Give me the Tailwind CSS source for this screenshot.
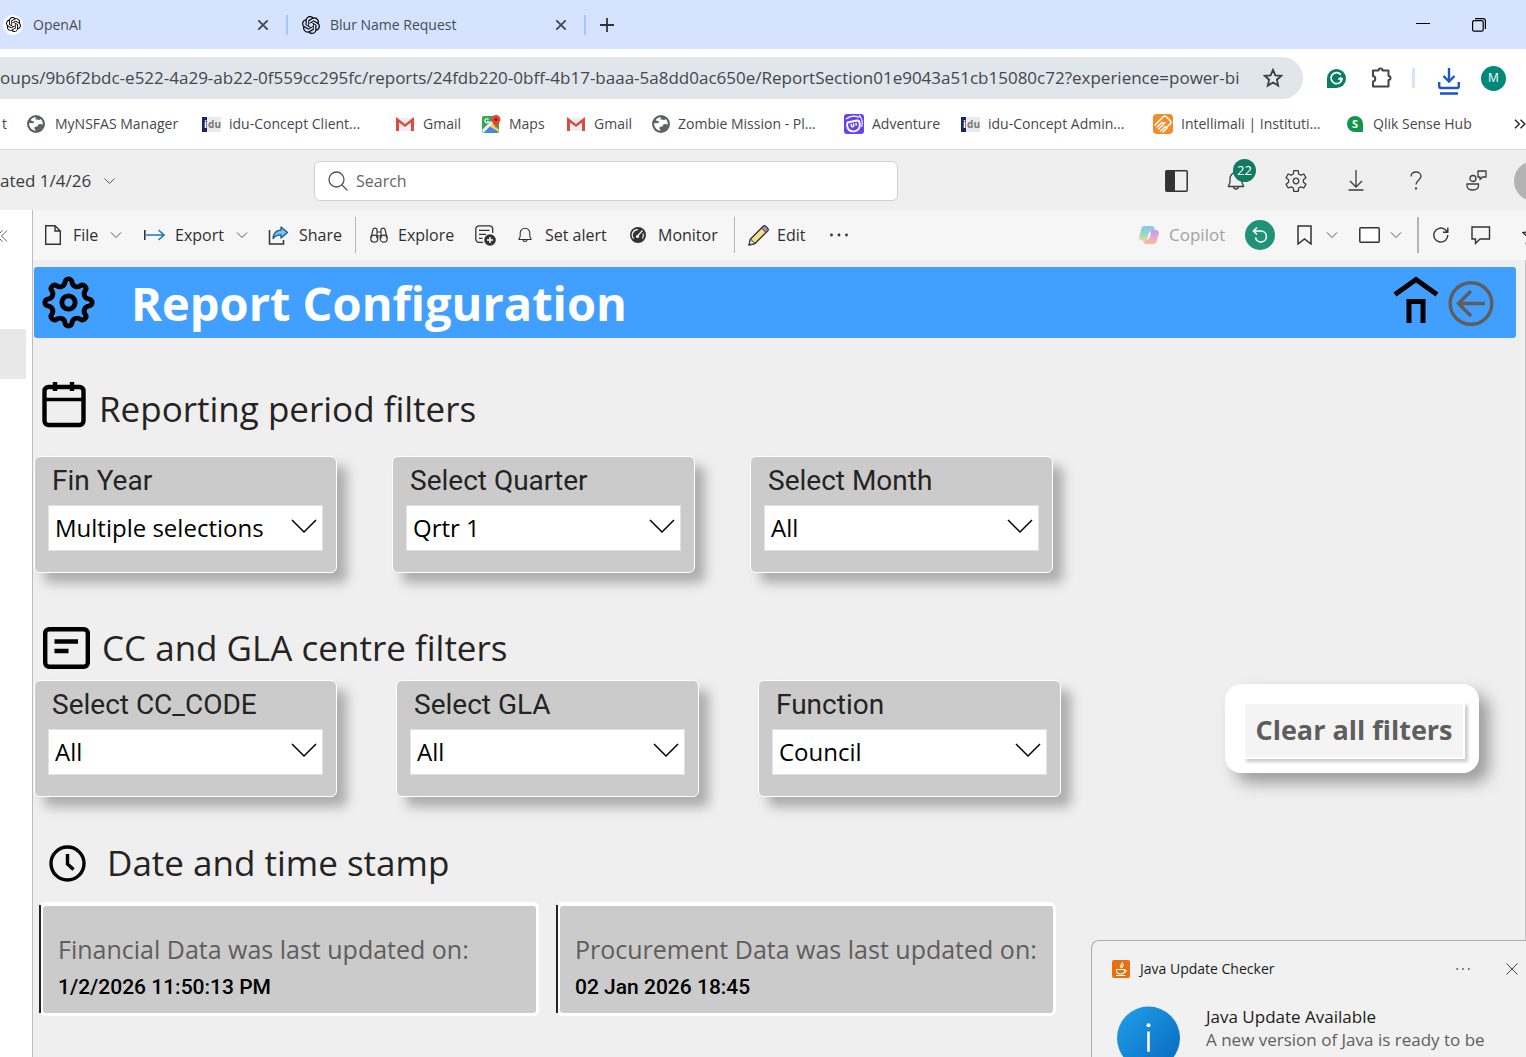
<!DOCTYPE html>
<html lang="en">
<head>
  <meta charset="UTF-8" />
  <meta name="viewport" content="width=device-width, initial-scale=1" />
  <title>Report Configuration</title>
  <script src="https://cdn.jsdelivr.net/npm/@tailwindcss/browser@4"></script>
</head>
<body class="h-screen overflow-hidden flex flex-col bg-white text-[#333] font-['Open_Sans',sans-serif]">

  <!-- shared icons -->
  <svg class="hidden">
    <symbol id="openai" viewBox="0 0 24 24"><path fill="currentColor" d="M22.2819 9.8211a5.9847 5.9847 0 0 0-.5157-4.9108 6.0462 6.0462 0 0 0-6.5098-2.9A6.0651 6.0651 0 0 0 4.9807 4.1818a5.9847 5.9847 0 0 0-3.9977 2.9 6.0462 6.0462 0 0 0 .7427 7.0966 5.98 5.98 0 0 0 .511 4.9107 6.051 6.051 0 0 0 6.5146 2.9001A5.9847 5.9847 0 0 0 13.2599 24a6.0557 6.0557 0 0 0 5.7718-4.2058 5.9894 5.9894 0 0 0 3.9977-2.9001 6.0557 6.0557 0 0 0-.7475-7.0729zm-9.022 12.6081a4.4755 4.4755 0 0 1-2.8764-1.0408l.1419-.0804 4.7783-2.7582a.7948.7948 0 0 0 .3927-.6813v-6.7369l2.02 1.1686a.071.071 0 0 1 .038.052v5.5826a4.504 4.504 0 0 1-4.4945 4.4944zm-9.6607-4.1254a4.4708 4.4708 0 0 1-.5346-3.0137l.142.0852 4.783 2.7582a.7712.7712 0 0 0 .7806 0l5.8428-3.3685v2.3324a.0804.0804 0 0 1-.0332.0615L9.74 19.9502a4.4992 4.4992 0 0 1-6.1408-1.6464zM2.3408 7.8956a4.485 4.485 0 0 1 2.3655-1.9728V11.6a.7664.7664 0 0 0 .3879.6765l5.8144 3.3543-2.0201 1.1685a.0757.0757 0 0 1-.071 0l-4.8303-2.7865A4.504 4.504 0 0 1 2.3408 7.872zm16.5963 3.8558L13.1038 8.364 15.1192 7.2a.0757.0757 0 0 1 .071 0l4.8303 2.7913a4.4944 4.4944 0 0 1-.6765 8.1042v-5.6772a.79.79 0 0 0-.407-.667zm2.0107-3.0231l-.142-.0852-4.7735-2.7818a.7759.7759 0 0 0-.7854 0L9.409 9.2297V6.8974a.0662.0662 0 0 1 .0284-.0615l4.8303-2.7866a4.4992 4.4992 0 0 1 6.6802 4.66zM8.3065 12.863l-2.02-1.1638a.0804.0804 0 0 1-.038-.0567V6.0742a4.4992 4.4992 0 0 1 7.3757-3.4537l-.142.0805L8.704 5.459a.7948.7948 0 0 0-.3927.6813zm1.0976-2.3654l2.602-1.4998 2.6069 1.4998v2.9994l-2.5974 1.4997-2.6067-1.4997Z"/></symbol>
    <symbol id="close" viewBox="0 0 12 12"><path d="M2 2l8 8M10 2l-8 8" fill="none" stroke="currentColor" stroke-width="1.7"/></symbol>
    <symbol id="globe" viewBox="0 0 18 18"><circle cx="9" cy="9" r="9" fill="#5f6368"/><path d="M8.500 2.300c-2 .2-3.500 1-4.700 2.700.8 1.100 1.900 1.500 3 1.200.4 1 .1 1.700-.9 2.100L3.300 8c-.9-.1-1.300.4-1.200 1.500.6 3.300 2.900 5.800 6.200 6.300.3-1.200-.1-1.800-1-2.100-.1-1.200.7-2 2.200-2.100 1.200 0 1.700-.7 1.400-1.800 1.200-1.100 2.800-1 4.700-.2.500-2.300-.3-4.300-2-5.700-.6 1-1.500 1.200-2.600.8-.9-.3-1.900.2-2.900 0 .9-.7 1.200-1.500.4-2.400z" fill="#fff"/></symbol>
    <symbol id="gmail" viewBox="0 0 20 16"><path d="M1 2h18v13H1z" fill="#eceff1"/><path d="M1 15V1l9 7 9-7v14h-3V6.500L10 11 4 6.500V15z" fill="#dd4b3e"/></symbol>
    <symbol id="chev" viewBox="0 0 12 8"><path d="M1 1.500l5 5 5-5" fill="none" stroke="#555" stroke-width="1"/></symbol>
    <symbol id="chev-lg" viewBox="0 0 26 15"><path d="M1 1l12 12L25 1" fill="none" stroke="#000" stroke-width="1.500"/></symbol>
    <symbol id="bell" viewBox="0 0 20 20"><path d="M10 1.500a6 6 0 0 0-6 6v4L2.300 15.500h15.400L16 11.500v-4a6 6 0 0 0-6-6zM7.500 15.500a2.500 2.500 0 0 0 5 0" fill="none" stroke="currentColor" stroke-width="1.3" stroke-linejoin="round"/></symbol>
  </svg>

  <!-- browser tabs -->
  <div class="h-[49px] shrink-0 bg-[#d5e3ff] flex items-center text-sm text-[#474b52]">
    <div class="w-[288px] flex items-center border-r-2 border-[#a8c7fa] h-5">
      <span class="size-5 ml-[3px] rounded-full bg-white flex items-center justify-center text-black"><svg class="size-[15px]"><use href="#openai"/></svg></span>
      <span class="ml-2.5 flex-1">OpenAI</span>
      <button aria-label="Close tab" class="mr-4"><svg class="size-[14px]"><use href="#close"/></svg></button>
    </div>
    <div class="w-[298px] flex items-center border-r-2 border-[#a8c7fa] h-5">
      <svg class="size-[18px] ml-3.5 text-black"><use href="#openai"/></svg>
      <span class="ml-2.5 flex-1">Blur Name Request</span>
      <button aria-label="Close tab" class="mr-4"><svg class="size-[14px]"><use href="#close"/></svg></button>
    </div>
    <button aria-label="New tab" class="ml-3.5"><svg class="size-[14px]" viewBox="0 0 14 14"><path d="M7 0v14M0 7h14" stroke="#333" stroke-width="1.8"/></svg></button>
    <div class="ml-auto flex items-center gap-[42px] pr-10 text-black">
      <button aria-label="Minimize"><svg class="size-[14px]" viewBox="0 0 14 14"><path d="M0 5.500h14" stroke="#000"/></svg></button>
      <button aria-label="Restore"><svg class="size-[14px]" viewBox="0 0 14 14" fill="none" stroke="#000" stroke-width="1.200"><rect x=".6" y="2.600" width="10.600" height="10.600" rx="1.500"/><path d="M3 .6h8.200a2.200 2.200 0 0 1 2.200 2.200V11"/></svg></button>
    </div>
  </div>

  <!-- address bar -->
  <div class="h-[58px] shrink-0 flex items-center">
    <div class="flex-1 h-[42px] flex items-center bg-[#e1e5ec] rounded-r-full pr-5">
      <input aria-label="Address" class="flex-1 min-w-0 text-[17px] text-[#44474c] outline-none" value="oups/9b6f2bdc-e522-4a29-ab22-0f559cc295fc/reports/24fdb220-0bff-4b17-baaa-5a8dd0ac650e/ReportSection01e9043a51cb15080c72?experience=power-bi" />
      <button aria-label="Bookmark this page"><svg class="size-5" viewBox="0 0 20 20"><path d="M10 1.800l2.400 5.500 6 .5-4.500 3.900 1.300 5.900L10 14.500l-5.200 3.100 1.300-5.900L1.600 7.800l6-.5z" fill="none" stroke="#3c4043" stroke-width="1.800"/></svg></button>
    </div>
    <div class="w-[223px] flex items-center pl-6">
      <button aria-label="Grammarly"><svg class="size-[19px]" viewBox="0 0 19 19"><path d="M0 19V9.500A9.500 9.500 0 1 1 9.500 19z" fill="#0b7d62"/><path d="M13.800 5.600a5.500 5.500 0 1 0 1.200 4.400h-4M13 8.300l2 1.700-1.500 2" fill="none" stroke="#fff" stroke-width="1.700"/></svg></button>
      <button aria-label="Extensions" class="ml-6"><svg class="w-[23px] h-[22px]" viewBox="0 0 23 22"><path d="M3 3.500h5.500a2 2 0 0 1 4 0H18.500v5.500a2 2 0 0 1 0 4V19.500H3V14.500a2.800 2.800 0 0 0 0-5.500z" fill="none" stroke="#444" stroke-width="2" stroke-linejoin="round"/></svg></button>
      <span class="w-[3px] h-5 ml-[19px] bg-[#d5e3ff]"></span>
      <button aria-label="Downloads" class="ml-[23px] mt-1.5"><svg class="w-[22px] h-[27px]" viewBox="0 0 22 27" fill="none" stroke="#1a56c4" stroke-width="2.400"><path d="M11 0v13M5.500 8l5.500 5.500L16.500 8M1.200 14v4a2 2 0 0 0 2 2h15.600a2 2 0 0 0 2-2v-4M2 25.500h18"/></svg></button>
      <button class="ml-[21px] size-[25px] rounded-full bg-[#00897b] text-white text-xs">M</button>
    </div>
  </div>

  <!-- bookmarks -->
  <nav class="h-[43px] shrink-0 border-b border-[#dcdcdc] flex items-center text-sm text-[#45484c] pb-2 whitespace-nowrap overflow-hidden">
    <a href="#" class="w-[27px] shrink-0 flex justify-end pr-5">t</a>
    <a href="#" class="w-[175px] shrink-0 flex items-center gap-2.5"><svg class="size-[18px]"><use href="#globe"/></svg>MyNSFAS Manager</a>
    <a href="#" class="w-[193px] shrink-0 flex items-center gap-2"><span class="w-[19px] h-[15px] bg-[#e9eaee] text-[10px] leading-[15px] font-bold text-[#777] flex"><span class="bg-[#1b2560] text-white w-[6px] pl-[2px] mr-px">i</span>du</span>idu-Concept Client...</a>
    <a href="#" class="w-[87px] shrink-0 flex items-center gap-2"><svg class="w-5 h-4"><use href="#gmail"/></svg>Gmail</a>
    <a href="#" class="w-[84px] shrink-0 flex items-center gap-2"><svg class="size-[19px]" viewBox="0 0 19 19"><rect y="1" width="17" height="17" rx="2" fill="#34a853"/><path d="M1 17.500L9 9.500l8 8z" fill="#4285f4"/><path d="M7 11l3-3 7 7v2z" fill="#fbd34b"/><path d="M0 15L9 6l2 2-9.500 10z" fill="#eee"/><path d="M14 0a4.500 4.500 0 0 1 4.500 4.500c0 3-3.700 4.500-4.500 9-.8-4.500-4.500-6-4.500-9A4.500 4.500 0 0 1 14 0z" fill="#ea4335"/><circle cx="14" cy="4.500" r="1.600" fill="#8e1c13"/><path d="M6.500 4.500a2 2 0 1 0 .3 2H5" fill="none" stroke="#fff" stroke-width="1.200"/></svg>Maps</a>
    <a href="#" class="w-[86px] shrink-0 flex items-center gap-2"><svg class="w-5 h-4"><use href="#gmail"/></svg>Gmail</a>
    <a href="#" class="w-[192px] shrink-0 flex items-center gap-2"><svg class="size-[18px]"><use href="#globe"/></svg>Zombie Mission - Pl...</a>
    <a href="#" class="w-[117px] shrink-0 flex items-center gap-2"><svg class="size-5" viewBox="0 0 20 20"><rect width="20" height="20" rx="3" fill="#6842ef"/><path d="M3.500 8.500l9.500-2c1.500 0 2.500 1 2.700 2.500.5 4-1 7.500-5 8.200-4 .6-6.700-1.200-7.400-4.700-.3-1.500-.3-2.800.2-4z" fill="none" stroke="#fff" stroke-width="1.900"/><path d="M7 10l.5 2a1.200 1.200 0 0 0 2.300-.5L9.500 9.500M12 9l.3 2.500" fill="none" stroke="#fff" stroke-width="1.500"/><path d="M2 5C6 2 11 1.500 15 3.500M15 1c3 3 4 8 2.500 12" fill="none" stroke="#fff" stroke-width="1.200"/></svg>Adventure</a>
    <a href="#" class="w-[192px] shrink-0 flex items-center gap-2"><span class="w-[19px] h-[15px] bg-[#e9eaee] text-[10px] leading-[15px] font-bold text-[#777] flex"><span class="bg-[#1b2560] text-white w-[6px] pl-[2px] mr-px">i</span>du</span>idu-Concept Admin...</a>
    <a href="#" class="w-[194px] shrink-0 flex items-center gap-2"><svg class="size-5" viewBox="0 0 20 20"><rect width="20" height="20" rx="4" fill="#f28c28"/><path d="M2 11l8.500-8.500a2 2 0 0 1 2.500 0l4.500 4.500a2 2 0 0 1 0 2.500L13 14M4 13l5-4.500 3 .5M5.500 15l5-4.500M7.500 17l5-4.500M10 18l4-4" fill="none" stroke="#fff" stroke-width="1.500" stroke-linecap="round"/></svg>Intellimali | Instituti...</a>
    <a href="#" class="shrink-0 flex items-center gap-2.5"><span class="size-4 rounded-full rounded-br-none bg-[#10954a] text-white text-[11px] leading-4 font-bold text-center">S</span>Qlik Sense Hub</a>
    <button aria-label="More bookmarks" class="ml-auto"><svg class="w-3 h-[10px]" viewBox="0 0 12 10"><path d="M1 .7L5.300 5 1 9.300M6.500.7L10.800 5l-4.300 4.300" fill="none" stroke="#333" stroke-width="1.600"/></svg></button>
  </nav>

  <!-- Power BI header -->
  <header class="h-[60px] shrink-0 bg-[#efefef] flex items-center text-[17px] pt-px">
    <button class="w-[314px] shrink-0 flex items-center gap-3 text-[#3a3a3a]">ated 1/4/26 <svg class="w-[13px] h-2"><use href="#chev"/></svg></button>
    <label class="w-[584px] h-10 flex items-center gap-2 px-[13px] bg-white border border-[#d0d0d0] rounded-md text-[#666]">
      <svg class="size-5 shrink-0" viewBox="0 0 20 20" fill="none" stroke="#555" stroke-width="1.300"><circle cx="8.500" cy="8.500" r="7.500"/><path d="M14 14l5.500 5.500"/></svg>
      <input type="search" aria-label="Search" placeholder="Search" class="flex-1 text-base placeholder:text-[#666] outline-none" />
    </label>
    <div class="ml-auto -mr-7 shrink-0 flex items-center text-[#3d3d3d]">
      <button aria-label="Switch panel" class="w-[60px] flex justify-center"><svg class="w-[23px] h-[22px]" viewBox="0 0 23 22"><rect x=".8" y=".8" width="21.400" height="20.400" rx="1" fill="none" stroke="#333" stroke-width="1.500"/><path d="M1 1h9v20H1z" fill="#333"/></svg></button>
      <button aria-label="Notifications" class="relative w-[60px] flex justify-center"><svg class="size-5"><use href="#bell"/></svg><span class="absolute left-[27px] -top-3 size-[23px] rounded-full bg-[#0f7b62] text-white text-[13px] leading-[22px]">22</span></button>
      <button aria-label="Settings" class="w-[60px] flex justify-center"><svg class="size-[22px]" viewBox="-11 -11 22 22" fill="none" stroke="currentColor" stroke-width="1.300" stroke-linejoin="round"><path d="M-2.200-10.300L2.200-10.300 2.700-7 4.800-5.800 7.800-7 10-3.200 7.400-1.300 7.400 1.300 10 3.200 7.800 7 4.800 5.800 2.700 7 2.200 10.300-2.200 10.300-2.700 7-4.800 5.800-7.800 7-10 3.200-7.400 1.300-7.400-1.300-10-3.200-7.800-7-4.800-5.800-2.700-7z"/><circle r="2.800"/></svg></button>
      <button aria-label="Download" class="w-[60px] flex justify-center"><svg class="w-4 h-[21px]" viewBox="0 0 16 21" fill="none" stroke="currentColor" stroke-width="1.300"><path d="M8 0v17M2 11l6 6 6-6M.5 20h15"/></svg></button>
      <button aria-label="Help" class="w-[60px] flex justify-center"><svg class="w-3 h-5" viewBox="0 0 12 20" fill="none" stroke="currentColor" stroke-width="1.300"><path d="M1 5.500C1 2.500 3.300 1 6 1s5 1.700 5 4.300C11 9 6 9.500 6 13.500"/><circle cx="6" cy="17.500" r=".5" fill="currentColor"/></svg></button>
      <button aria-label="Feedback" class="w-[60px] flex justify-center"><svg class="w-[21px] h-[21px]" viewBox="0 0 21 21" fill="none" stroke="currentColor" stroke-width="1.300" stroke-linejoin="round"><circle cx="7" cy="8.500" r="3"/><path d="M1 14h11.500v1.500c0 3-2.500 4.500-5.700 4.500S1 18.500 1 15.500zM12 1h8v6h-3.500L14 9.500V7h-2z"/></svg></button>
      <button aria-label="Account" class="ml-2 size-10 rounded-full bg-[#b3b3b3]"></button>
    </div>
  </header>

  <div class="flex-1 min-h-0 flex">
    <aside class="w-[33px] shrink-0 border-r border-[#bdbdbd] bg-white">
      <button aria-label="Collapse pages" class="h-[51px] block"><svg class="w-2 h-3" viewBox="4 0 8 12"><path d="M6.500.5L1 6l5.500 5.500M11 .5L5.500 6l5.500 5.500" fill="none" stroke="#666"/></svg></button>
      <div class="mt-[68px] w-[26px] h-[50px] bg-[#e8e8e8]"></div>
    </aside>

    <main class="flex-1 min-w-0 flex flex-col bg-[#efefef]">
      <!-- report actions -->
      <div class="h-[50px] shrink-0 bg-[#f6f6f6] flex items-center text-base text-[#2f2f2f] whitespace-nowrap overflow-hidden">
        <button class="w-[99px] ml-3 shrink-0 flex items-center"><svg class="w-4 h-5" viewBox="0 0 16 20" fill="none" stroke="#333" stroke-width="1.400"><path d="M.7.7H10l5.300 5.300v13.300H.7zM10 .7V6h5.300"/></svg><span class="ml-3 mr-auto">File</span><svg class="w-3 h-2 mr-[22px]"><use href="#chev"/></svg></button>
        <button class="w-[124px] shrink-0 flex items-center"><svg class="w-[21px] h-3" viewBox="0 0 21 12" fill="none" stroke="#1c7cb5" stroke-width="1.600"><path d="M2 6h18M14.500 1L20 6l-5.500 5"/><path d="M.8 1v10" stroke="#333"/></svg><span class="ml-2.5 mr-auto">Export</span><svg class="w-3 h-2 mr-5"><use href="#chev"/></svg></button>
        <button class="w-[87px] shrink-0 flex items-center gap-2.5"><svg class="w-[21px] h-[19px]" viewBox="0 0 20 19"><path d="M1 4v14h14v-4" fill="none" stroke="#333" stroke-width="1.500"/><path d="M12.500 1L19 6.500 12.500 12V8.800C9 8.800 6.500 10 4.500 12.500 5 7.500 8 4.300 12.500 4.200z" fill="#7cc0ec" stroke="#125a93" stroke-width="1.300" stroke-linejoin="round"/></svg>Share</button>
        <span class="w-px h-9 bg-[#b5b5b5] shrink-0"></span>
        <button class="w-[104px] pl-3.5 shrink-0 flex items-center gap-2.5"><svg class="w-[18px] h-4" viewBox="0 0 18 16" fill="none" stroke="#333" stroke-width="1.200"><circle cx="4.300" cy="11.700" r="3.500"/><circle cx="13.700" cy="11.700" r="3.500"/><path d="M.9 11L3 2.500C3.300.7 6.500.7 7 2.500v9M17.100 11L15 2.500c-.3-1.800-3.500-1.800-4 0v9M7 5h4M7 9h4"/></svg>Explore</button>
        <button aria-label="Add to" class="w-[57px] pl-[15px] shrink-0"><svg class="size-[21px]" viewBox="0 0 21 21"><path d="M8 17.300H4A3.200 3.200 0 0 1 .8 14V4A3.200 3.200 0 0 1 4 .8h10.500A3.200 3.200 0 0 1 17.700 4v4M4 5.300h10.500M4 9.300h7M4 13.300h3.500" fill="none" stroke="#333" stroke-width="1.300"/><circle cx="15" cy="15" r="5.800" fill="#333"/><path d="M15 12v6M12 15h6" stroke="#fff" stroke-width="1.500"/></svg></button>
        <button class="w-[113px] shrink-0 flex items-center gap-3"><svg class="w-4 h-[18px]"><use href="#bell"/></svg>Set alert</button>
        <button class="w-[104px] shrink-0 flex items-center gap-3"><svg class="size-4" viewBox="0 0 16 16"><circle cx="8" cy="8" r="8" fill="#333"/><path d="M3.600 11.500A5.300 5.300 0 0 1 8 2.700M13 6.500a5.300 5.300 0 0 1-.6 5M12.500 3.500L7.500 9" fill="none" stroke="#f6f6f6" stroke-width="1.200"/><circle cx="7.500" cy="9.500" r="1.600" fill="#f6f6f6"/></svg>Monitor</button>
        <span class="w-px h-9 bg-[#b5b5b5] shrink-0"></span>
        <button class="w-[95px] pl-[13px] shrink-0 flex items-center gap-2"><svg class="size-[21px]" viewBox="0 0 21 21"><path d="M1 20l1.500-6L15 1.500a2 2 0 0 1 2.800 0l1.700 1.700a2 2 0 0 1 0 2.800L7 18.500z" fill="#f3dd8c" stroke="#333" stroke-width="1.400" stroke-linejoin="round"/><path d="M13.500 3l4.500 4.500 1.500-1.500a2 2 0 0 0 0-2.800l-1.700-1.700a2 2 0 0 0-2.800 0z" fill="#a78bb0" stroke="#333"/><path d="M2.500 14L7 18.500 1 20z" fill="#ddd" stroke="#333"/></svg>Edit</button>
        <button aria-label="More options" class="shrink-0"><svg class="w-[18px] h-1" viewBox="0 0 18 4" fill="#333"><circle cx="1.500" cy="2" r="1.400"/><circle cx="9" cy="2" r="1.400"/><circle cx="16.500" cy="2" r="1.400"/></svg></button>

        <div class="ml-auto flex items-center shrink-0">
          <button class="flex items-center gap-2.5 w-[106px] text-[17px] text-[#a3a3a3]"><svg class="size-5" viewBox="0 0 20 20"><defs><linearGradient id="cpA" x1="0" y1="0" x2="0" y2="1"><stop offset="0" stop-color="#8cc4f2"/><stop offset=".5" stop-color="#8fd6cf"/><stop offset="1" stop-color="#e3dd8a"/></linearGradient><linearGradient id="cpB" x1="0" y1="0" x2="0" y2="1"><stop offset="0" stop-color="#b8a0ee"/><stop offset=".5" stop-color="#eda5cf"/><stop offset="1" stop-color="#f7bd97"/></linearGradient></defs><path d="M5.500 1H13c1.800 0 2.300 1.500 2.800 4H13c-1.500 0-2.300.8-2.700 2L8.500 13c-.5 1.500-1.300 2.500-3 2.500H3.500C1 15.500-.3 14 .3 11.500L2.300 4C2.800 2 3.700 1 5.500 1z" fill="url(#cpA)"/><path d="M14.500 19H7c-1.800 0-2.300-1.500-2.800-3.500H6c1.700 0 2.500-1 3-2.500L10.800 7c.4-1.200 1.200-2 2.700-2h3c2.500 0 3.800 1.500 3.200 4l-2 7c-.5 2-1.400 3-3.200 3z" fill="url(#cpB)"/><path d="M10.200 7.500h2L10 13.500c-.3.800-.8 1-1.500 1z" fill="#fff"/></svg>Copilot</button>
          <button aria-label="Reset" class="size-[30px] rounded-full bg-[#1f9377] flex items-center justify-center"><svg class="size-4" viewBox="0 0 16 16" fill="none" stroke="#fff" stroke-width="1.600"><path d="M1.500 4H9a5.500 5.500 0 1 1-5.500 6.500M5 .5L1.500 4 5 7.500"/></svg></button>
          <button aria-label="Bookmarks" class="w-[62px] ml-[22px] flex items-center gap-3.5"><svg class="w-[15px] h-5" viewBox="0 0 15 20"><path d="M1 1h13v18l-6.500-5L1 19z" fill="none" stroke="#333" stroke-width="1.500"/></svg><svg class="w-3 h-2"><use href="#chev"/></svg></button>
          <button aria-label="View" class="w-[58px] flex items-center gap-2.5"><svg class="w-[21px] h-4" viewBox="0 0 21 16"><rect x=".8" y=".8" width="19.400" height="14.400" rx="1" fill="#fff" stroke="#333" stroke-width="1.500"/></svg><svg class="w-3 h-2"><use href="#chev"/></svg></button>
          <span class="w-0.5 h-9 bg-[#b5b5b5]"></span>
          <button aria-label="Refresh" class="ml-3.5"><svg class="size-4" viewBox="0 0 16 16" fill="none" stroke="#333" stroke-width="1.400"><path d="M14.800 8A7 7 0 1 1 12 2.500L14.500 5M14.800.5V5.200H10"/></svg></button>
          <button aria-label="Comment" class="ml-[22px]"><svg class="w-5 h-[19px]" viewBox="0 0 20 19"><path d="M1 1h17.500v12H9l-4.500 4.500V13H1z" fill="none" stroke="#333" stroke-width="1.400"/></svg></button>
          <button aria-label="Favorite" class="ml-[31px] w-1 overflow-hidden"><svg class="size-5 max-w-none" viewBox="0 0 20 20"><path d="M10 1l2.700 6 6.300.6-4.800 4.200 1.400 6.200L10 14.800 4.400 18l1.400-6.200L1 7.600 7.300 7z" fill="none" stroke="#333" stroke-width="1.400"/></svg></button>
        </div>
      </div>

      <!-- report canvas -->
      <section class="flex-1 min-h-0 border-r border-[#c4c4c4] pl-px pt-[7px]">
        <div class="h-[71px] mr-[9px] flex items-center bg-[#419fff] rounded-[3px] pl-2 pr-[22px]">
          <svg class="size-[53px]" viewBox="-26 -26 52 52" fill="none" stroke="#000" stroke-width="4.800"><path d="M-3.500-19.700A3.500 3.500 0 0 1 3.500-19.700A5 5 0 0 0 11.500-16.400A3.500 3.500 0 0 1 16.400-11.500A5 5 0 0 0 19.700-3.500A3.500 3.500 0 0 1 19.700 3.500A5 5 0 0 0 16.400 11.500A3.500 3.500 0 0 1 11.500 16.400A5 5 0 0 0 3.500 19.700A3.500 3.500 0 0 1-3.500 19.700A5 5 0 0 0-11.500 16.400A3.500 3.500 0 0 1-16.400 11.500A5 5 0 0 0-19.700 3.500A3.500 3.500 0 0 1-19.700-3.500A5 5 0 0 0-16.400-11.500A3.500 3.500 0 0 1-11.500-16.400A5 5 0 0 0-3.500-19.700z"/><circle r="6.500"/></svg>
          <h1 class="ml-9 mr-auto text-[47px] leading-[70px] font-bold text-white">Report Configuration</h1>
          <button aria-label="Home" class="mr-[9px]"><svg class="w-[46px] h-[54px]" viewBox="0 0 46 54" fill="none" stroke="#000" stroke-width="5"><path d="M2 18.500L23 3.500l21 15M16 47V25.500h14V47"/></svg></button>
          <button aria-label="Back"><svg class="size-[46px]" viewBox="0 0 46 46" fill="none" stroke="#605e5c" stroke-width="3.500"><circle cx="23" cy="23.500" r="20.800"/><path d="M37 23.500H10M23 11L10.500 23.500 23 36"/></svg></button>
        </div>

        <h2 class="mt-11 h-[54px] pl-2 flex items-center gap-[13px] text-[35px] text-[#252423]">
          <svg class="w-11 h-[54px]" viewBox="0 0 44 54" fill="none" stroke="#000" stroke-width="4.400"><rect x="2.500" y="5" width="39" height="38" rx="4"/><path d="M2 17.500h39" stroke-width="3.500"/><path d="M13 0v9M30 0v9"/></svg>
          Reporting period filters
        </h2>
        <div class="mt-5 flex gap-[55px]">
          <div class="w-[303px] h-[117px] px-[13px] bg-[#cbcbcb] border border-white rounded-[6px] shadow-[10px_10px_12px_rgba(0,0,0,0.28)]">
            <label for="finYear" class="block pl-1 text-[28px] leading-[48px] text-[#252423] font-['Roboto',sans-serif]">Fin Year</label>
            <div class="relative">
              <select id="finYear" class="w-full h-[46px] px-[6px] appearance-none bg-white border border-[#e2e2e2] text-2xl text-black"><option>Multiple selections</option></select>
              <svg class="absolute right-[6px] top-[14px] w-[26px] h-[15px] pointer-events-none"><use href="#chev-lg"/></svg>
            </div>
          </div>
          <div class="w-[303px] h-[117px] px-[13px] bg-[#cbcbcb] border border-white rounded-[6px] shadow-[10px_10px_12px_rgba(0,0,0,0.28)]">
            <label for="quarter" class="block pl-1 text-[28px] leading-[48px] text-[#252423] font-['Roboto',sans-serif]">Select Quarter</label>
            <div class="relative">
              <select id="quarter" class="w-full h-[46px] px-[6px] appearance-none bg-white border border-[#e2e2e2] text-2xl text-black"><option>Qrtr 1</option></select>
              <svg class="absolute right-[6px] top-[14px] w-[26px] h-[15px] pointer-events-none"><use href="#chev-lg"/></svg>
            </div>
          </div>
          <div class="w-[303px] h-[117px] px-[13px] bg-[#cbcbcb] border border-white rounded-[6px] shadow-[10px_10px_12px_rgba(0,0,0,0.28)]">
            <label for="month" class="block pl-1 text-[28px] leading-[48px] text-[#252423] font-['Roboto',sans-serif]">Select Month</label>
            <div class="relative">
              <select id="month" class="w-full h-[46px] px-[6px] appearance-none bg-white border border-[#e2e2e2] text-2xl text-black"><option>All</option></select>
              <svg class="absolute right-[6px] top-[14px] w-[26px] h-[15px] pointer-events-none"><use href="#chev-lg"/></svg>
            </div>
          </div>
        </div>

        <h2 class="mt-[51px] h-12 pl-[9px] flex items-center gap-3 text-[35px] text-[#252423]">
          <svg class="w-[47px] h-[42px]" viewBox="0 0 47 42" fill="none" stroke="#000" stroke-width="4.400"><rect x="2.200" y="2.200" width="42.600" height="37.600" rx="4"/><path d="M11.500 14.500h23.500M11.500 24h14"/></svg>
          CC and GLA centre filters
        </h2>
        <div class="mt-2 flex gap-[59px]">
          <div class="w-[303px] h-[117px] px-[13px] bg-[#cbcbcb] border border-white rounded-[6px] shadow-[10px_10px_12px_rgba(0,0,0,0.28)]">
            <label for="ccCode" class="block pl-1 text-[28px] leading-[48px] text-[#252423] font-['Roboto',sans-serif]">Select CC_CODE</label>
            <div class="relative">
              <select id="ccCode" class="w-full h-[46px] px-[6px] appearance-none bg-white border border-[#e2e2e2] text-2xl text-black"><option>All</option></select>
              <svg class="absolute right-[6px] top-[14px] w-[26px] h-[15px] pointer-events-none"><use href="#chev-lg"/></svg>
            </div>
          </div>
          <div class="w-[303px] h-[117px] px-[13px] bg-[#cbcbcb] border border-white rounded-[6px] shadow-[10px_10px_12px_rgba(0,0,0,0.28)]">
            <label for="gla" class="block pl-1 text-[28px] leading-[48px] text-[#252423] font-['Roboto',sans-serif]">Select GLA</label>
            <div class="relative">
              <select id="gla" class="w-full h-[46px] px-[6px] appearance-none bg-white border border-[#e2e2e2] text-2xl text-black"><option>All</option></select>
              <svg class="absolute right-[6px] top-[14px] w-[26px] h-[15px] pointer-events-none"><use href="#chev-lg"/></svg>
            </div>
          </div>
          <div class="w-[303px] h-[117px] px-[13px] bg-[#cbcbcb] border border-white rounded-[6px] shadow-[10px_10px_12px_rgba(0,0,0,0.28)]">
            <label for="func" class="block pl-1 text-[28px] leading-[48px] text-[#252423] font-['Roboto',sans-serif]">Function</label>
            <div class="relative">
              <select id="func" class="w-full h-[46px] px-[6px] appearance-none bg-white border border-[#e2e2e2] text-2xl text-black"><option>Council</option></select>
              <svg class="absolute right-[6px] top-[14px] w-[26px] h-[15px] pointer-events-none"><use href="#chev-lg"/></svg>
            </div>
          </div>
          <div class="ml-auto mr-[46px] mt-1 w-[254px] h-[89px] pt-[18px] pl-[18px] bg-white rounded-2xl shadow-[10px_10px_16px_rgba(0,0,0,0.35)]">
            <button id="clearBtn" class="w-[222px] h-[57px] bg-[#f4f4f4] border-2 border-white shadow-[3px_3px_3px_rgba(0,0,0,0.2)] text-[27px] font-bold text-[#605e5c] whitespace-nowrap">Clear all filters</button>
          </div>
        </div>

        <h2 class="mt-[42px] h-12 pl-[15px] flex items-center gap-[21px] text-[35px] text-[#252423]">
          <svg class="size-[37px]" viewBox="0 0 37 37" fill="none" stroke="#000" stroke-width="3.400"><circle cx="18.500" cy="18.500" r="16.500"/><path d="M18.500 9v10l6 5.500"/></svg>
          Date and time stamp
        </h2>
        <div class="mt-[15px] pl-[5px] flex gap-[17px]">
          <div class="relative w-[500px] h-[114px] bg-white rounded-md pt-1 pb-[3px] pl-1 pr-[3px]">
            <span class="absolute left-0 top-[3px] bottom-[3px] w-0.5 bg-[#252423]"></span>
            <div class="h-full bg-[#cbcbcb] rounded-[3px] pt-[25px] pl-[15px]">
              <p class="text-[25px] leading-9 text-[#605e5c]">Financial Data was last updated on:</p>
              <p class="text-[21px] leading-10 font-medium text-black font-['Roboto',sans-serif]">1/2/2026 11:50:13 PM</p>
            </div>
          </div>
          <div class="relative w-[500px] h-[114px] bg-white rounded-md pt-1 pb-[3px] pl-1 pr-[3px]">
            <span class="absolute left-0 top-[3px] bottom-[3px] w-0.5 bg-[#252423]"></span>
            <div class="h-full bg-[#cbcbcb] rounded-[3px] pt-[25px] pl-[15px]">
              <p class="text-[25px] leading-9 text-[#605e5c] whitespace-nowrap">Procurement Data was last updated on:</p>
              <p class="text-[21px] leading-10 font-medium text-black font-['Roboto',sans-serif]">02 Jan 2026 18:45</p>
            </div>
          </div>
        </div>
      </section>
    </main>
  </div>

  <!-- Java notification -->
  <div id="toast" class="fixed right-0 bottom-0 w-[435px] h-[117px] overflow-hidden bg-[#f1f1f1] border-t border-l border-[#adadad] rounded-tl-lg">
    <div class="flex items-center h-14 pl-5 pr-2">
      <svg class="size-[18px]" viewBox="0 0 18 18"><rect width="18" height="18" rx="2" fill="#e8700c"/><path d="M10 2c1.500 2-3 3-1 6M12 4.500c-2 1-2.500 2-1.500 3.500" fill="none" stroke="#fff" stroke-width="1.100"/><path d="M4.500 9.500h8v1.500a3 3 0 0 1-3 3h-2a3 3 0 0 1-3-3zM12.500 10c2-.5 2.500 2-.5 2.500M4 15.500h9.500" fill="none" stroke="#fff" stroke-width="1.100"/></svg>
      <span class="ml-2.5 mr-auto text-sm text-[#1b1b1b]">Java Update Checker</span>
      <button aria-label="Options" class="mr-9"><svg class="w-[14px] h-1" viewBox="0 0 14 4" fill="#555"><circle cx="1.200" cy="2" r=".9"/><circle cx="7" cy="2" r=".9"/><circle cx="12.800" cy="2" r=".9"/></svg></button>
      <button id="toastClose" aria-label="Dismiss"><svg class="size-3" viewBox="0 0 12 12"><path d="M.5.500l11 11M11.500.5l-11 11" stroke="#444" stroke-width="1"/></svg></button>
    </div>
    <div class="flex pl-6 pt-2">
      <svg class="size-[65px] shrink-0" viewBox="0 0 64 64"><defs><linearGradient id="info" x1="0" y1="0" x2="1" y2="1"><stop offset="0" stop-color="#1fa0e8"/><stop offset="1" stop-color="#0a68c0"/></linearGradient></defs><circle cx="32" cy="32.500" r="31" fill="url(#info)"/><circle cx="32" cy="20" r="2" fill="#fff"/><path d="M32 26v20" stroke="#fff" stroke-width="2.500"/></svg>
      <div class="ml-[25px] text-[17px] leading-[23px] text-[#5f5f5f] whitespace-nowrap">
        <p class="text-[#1b1b1b]">Java Update Available</p>
        <p>A new version of Java is ready to be<br />installed!</p>
      </div>
    </div>
  </div>

<script>
  const toast = document.getElementById("toast");
  document.getElementById("toastClose").onclick = () => toast.classList.add("hidden");

  document.getElementById("clearBtn").addEventListener("click", () => {
    document.querySelectorAll("select").forEach((s) => {
      s.options[0].textContent = "All";
    });
  });
</script>
</body>
</html>
